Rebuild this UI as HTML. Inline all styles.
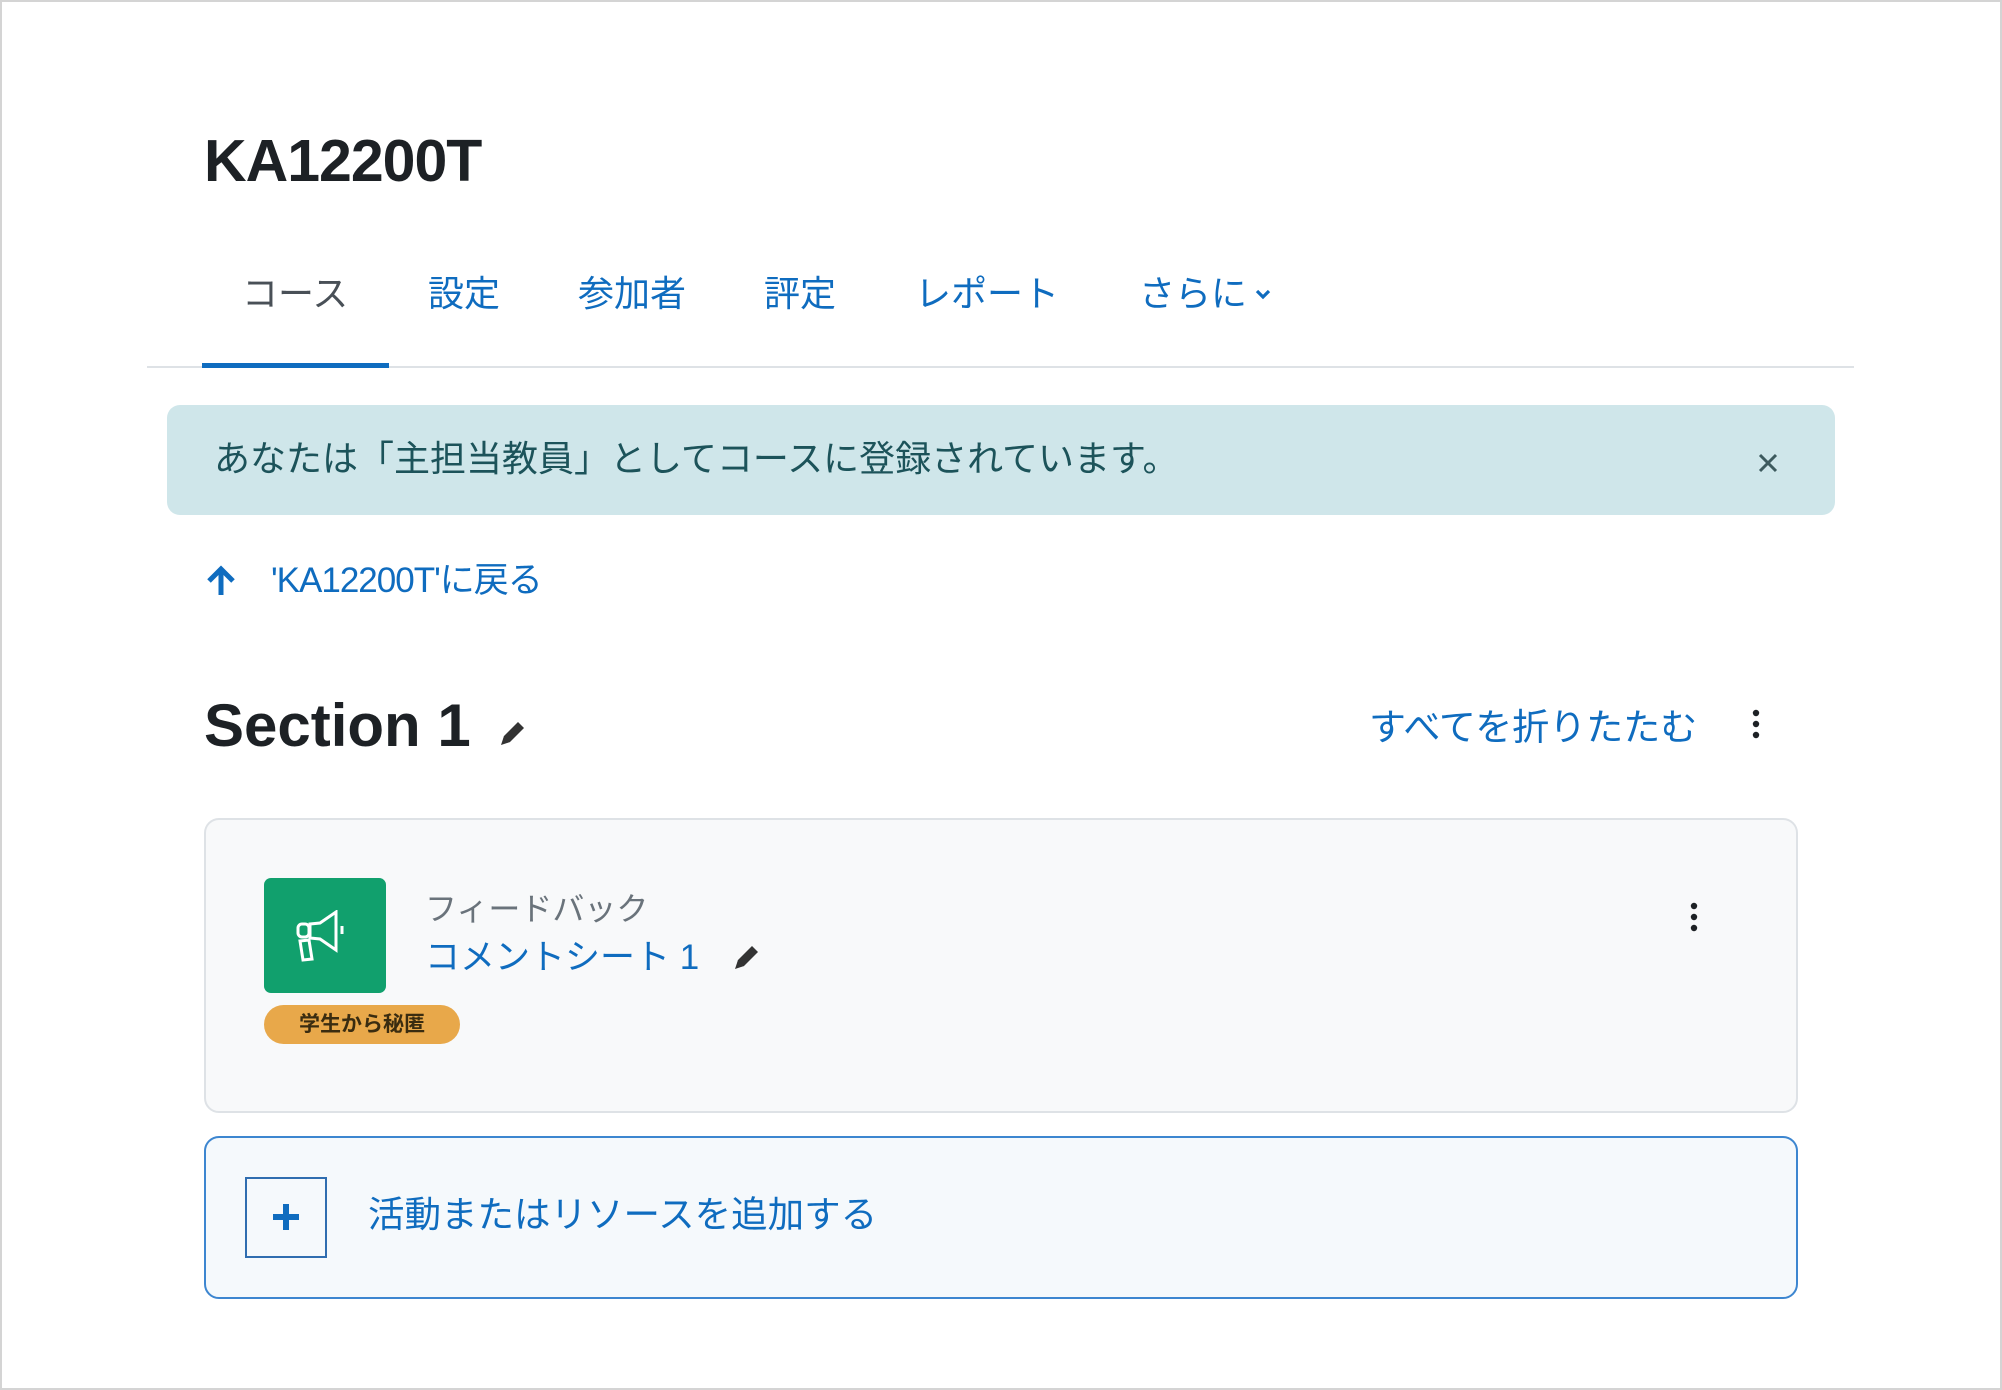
<!DOCTYPE html>
<html><head><meta charset="utf-8"><style>
*{margin:0;padding:0;box-sizing:border-box}
body{width:2002px;height:1390px;background:#fff;position:relative;overflow:hidden;font-family:"Liberation Sans","Noto Sans CJK JP",sans-serif;}
.frame{position:absolute;left:0;top:0;width:2002px;height:1390px;border:2px solid #d4d4d4}
.a{position:absolute;white-space:nowrap}
.blue{color:#0f6cbf}
.tab{font-size:36px;line-height:44px;top:272px}
</style></head><body>
<div class="frame"></div>
<div class="a" style="left:204px;top:125px;font-size:59px;font-weight:bold;color:#1d2125;line-height:72px;letter-spacing:-1px">KA12200T</div>

<div class="a tab" style="left:242px;color:#495057">コース</div>
<div class="a blue tab" style="left:428px">設定</div>
<div class="a blue tab" style="left:578px">参加者</div>
<div class="a blue tab" style="left:764px">評定</div>
<div class="a blue tab" style="left:915px">レポート</div>
<div class="a blue tab" style="left:1139px">さらに</div>
<svg class="a" style="left:1253px;top:284px" width="20" height="20" viewBox="0 0 20 20"><path d="M4 7l6 6 6-6" fill="none" stroke="#0f6cbf" stroke-width="3.2"/></svg>
<div class="a" style="left:147px;top:366px;width:1707px;height:2px;background:#dee2e6"></div>
<div class="a" style="left:202px;top:363px;width:187px;height:5px;background:#0f6cbf"></div>

<div class="a" style="left:167px;top:405px;width:1668px;height:110px;background:#cfe6ea;border-radius:13px"></div>
<div class="a" style="left:214px;top:437px;font-size:36px;line-height:44px;color:#1c535a">あなたは「主担当教員」としてコースに登録されています。</div>
<svg class="a" style="left:1756px;top:451px" width="24" height="24" viewBox="0 0 24 24"><path d="M4 4l16 16M20 4L4 20" stroke="#3d5a5e" stroke-width="3"/></svg>

<svg class="a" style="left:204px;top:565px" width="34" height="32" viewBox="0 0 34 32"><path d="M17 30V5M5 16L17 4l12 12" fill="none" stroke="#0f6cbf" stroke-width="5"/></svg>
<div class="a blue" style="left:271px;top:560px;font-size:35px;line-height:42px;letter-spacing:-1px">'KA12200T'に戻る</div>

<div class="a" style="left:204px;top:690px;font-size:60px;font-weight:bold;line-height:72px;color:#1d2125">Section 1</div>
<svg class="a" style="left:496px;top:718px" width="32" height="32" viewBox="0 0 32 32"><path d="M6 26l2-8L22 4l6 6L14 24z" fill="#333"/><path d="M5 27l3-9 6 6z" fill="#333"/></svg>
<div class="a blue" style="left:1369px;top:706px;font-size:37px;line-height:44px">すべてを折りたたむ</div>
<svg class="a" style="left:1750px;top:708px" width="12" height="32" viewBox="0 0 12 32"><circle cx="6" cy="5" r="3.2" fill="#1d2125"/><circle cx="6" cy="16" r="3.2" fill="#1d2125"/><circle cx="6" cy="27" r="3.2" fill="#1d2125"/></svg>

<div class="a" style="left:204px;top:818px;width:1594px;height:295px;background:#f8f9fa;border:2px solid #dee2e6;border-radius:15px"></div>
<div class="a" style="left:264px;top:878px;width:122px;height:115px;background:#11a06d;border-radius:7px"></div>
<svg class="a" style="left:294px;top:910px" width="62" height="60" viewBox="0 0 62 60"><g fill="none" stroke="#fff" stroke-width="3"><rect x="4" y="14" width="11" height="13" rx="4"/><path d="M16 14l10-1 16-11v38L26 29l-10-1z"/><path d="M48 16v8"/><path d="M6 31l9-1 3 19-9 1z"/></g></svg>
<div class="a" style="left:425px;top:890px;font-size:32px;line-height:38px;color:#6a737b">フィードバック</div>
<div class="a blue" style="left:425px;top:937px;font-size:35px;line-height:42px">コメントシート 1</div>
<svg class="a" style="left:730px;top:942px" width="32" height="32" viewBox="0 0 32 32"><path d="M6 26l2-8L22 4l6 6L14 24z" fill="#333"/><path d="M5 27l3-9 6 6z" fill="#333"/></svg>
<svg class="a" style="left:1688px;top:901px" width="12" height="32" viewBox="0 0 12 32"><circle cx="6" cy="5" r="3.2" fill="#1d2125"/><circle cx="6" cy="16" r="3.2" fill="#1d2125"/><circle cx="6" cy="27" r="3.2" fill="#1d2125"/></svg>
<div class="a" style="left:264px;top:1005px;width:196px;height:39px;background:#e8a84a;border-radius:20px;font-size:21px;font-weight:bold;line-height:39px;text-align:center;color:#3a2c10">学生から秘匿</div>

<div class="a" style="left:204px;top:1136px;width:1594px;height:163px;background:#f5f9fc;border:2px solid #3d86d0;border-radius:15px"></div>
<div class="a" style="left:245px;top:1177px;width:82px;height:81px;border:2px solid #2f6db0;background:#f5f9fc"></div>
<svg class="a" style="left:270px;top:1201px" width="32" height="32" viewBox="0 0 32 32"><path d="M16 3v26M3 16h26" stroke="#0f6cbf" stroke-width="6"/></svg>
<div class="a blue" style="left:368px;top:1193px;font-size:36.5px;line-height:44px">活動またはリソースを追加する</div>
</body></html>
